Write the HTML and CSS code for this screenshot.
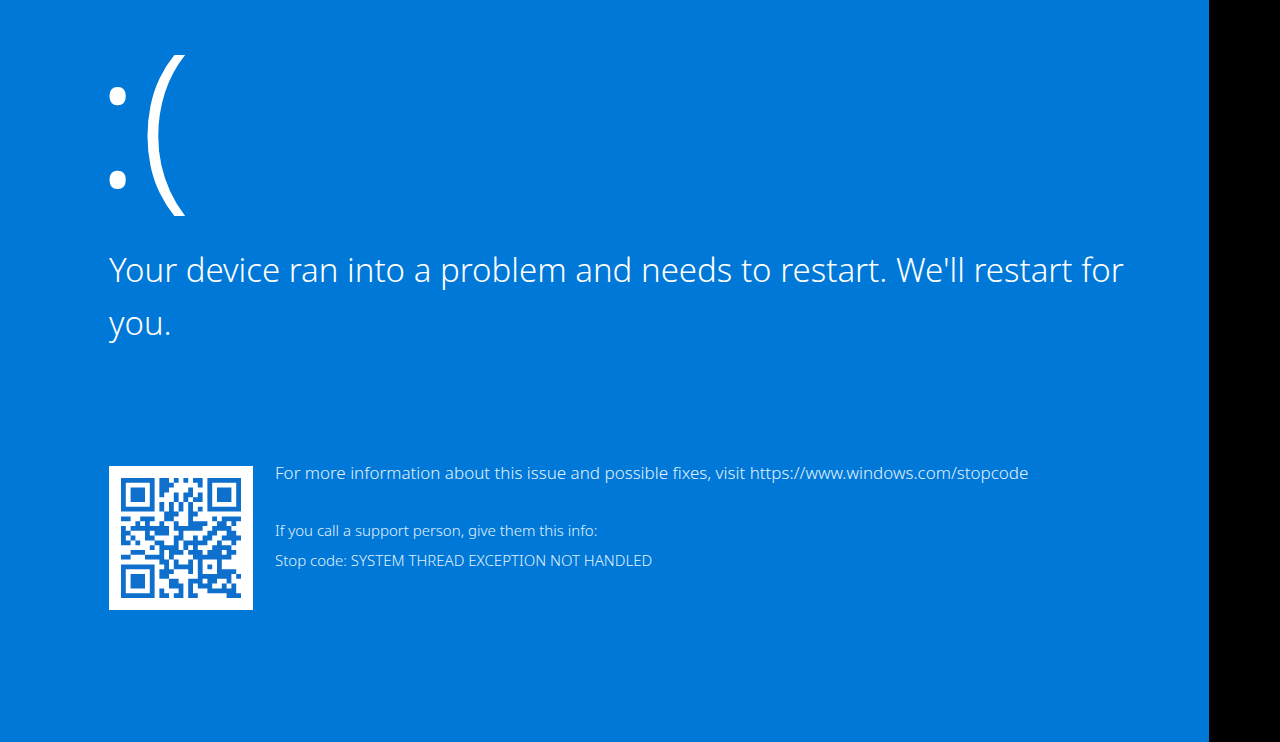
FILE: index.html
```
<!DOCTYPE html>
<html lang="en">
<head>
    <meta charset="utf-8">
    <title>Your device ran into a problem</title>
    <link rel="stylesheet" href="styles.css">
</head>
<body>

<main class="screen">
    <div class="face">:(</div>
    <h1 class="message">Your device ran into a problem and needs to restart. We'll restart for you.</h1>

    <div class="details">
        <div class="qr">
            <svg class="qr-code" viewBox="0 0 25 25" role="img" aria-label="QR code for https://www.windows.com/stopcode">
                <!-- one line of the code per row, each run of dark modules is a stroke -->
                <path transform="translate(0 .5)" d="
                    M0 0h7m1 0h2m1 0h1m1 0h1m1 0h2m1 0h7
                    M0 1h1m5 0h1m1 0h3m5 0h1m1 0h1m5 0h1
                    M0 2h1m1 0h3m1 0h1m1 0h2m4 0h1m3 0h1m1 0h3m1 0h1
                    M0 3h1m1 0h3m1 0h1m1 0h1m2 0h1m1 0h2m1 0h1m1 0h1m1 0h3m1 0h1
                    M0 4h1m1 0h3m1 0h1m4 0h1m1 0h1m1 0h2m1 0h1m1 0h3m1 0h1
                    M0 5h1m5 0h1m1 0h1m1 0h1m1 0h1m1 0h1m3 0h1m5 0h1
                    M0 6h7m1 0h1m1 0h1m1 0h1m1 0h1m1 0h1m1 0h7
                    M9 7h3m2 0h2
                    M0 8h2m2 0h3m2 0h2m3 0h1m4 0h1m1 0h4
                    M3 9h1m1 0h1m2 0h1m2 0h1m2 0h4m2 0h2m1 0h1
                    M0 10h1m1 0h8m1 0h6m2 0h4
                    M0 11h2m3 0h1m1 0h3m2 0h1m5 0h2m2 0h2
                    M0 12h1m1 0h1m2 0h2m4 0h2m2 0h1m1 0h2m2 0h4
                    M0 13h2m1 0h1m3 0h2m2 0h1m1 0h5m2 0h1m2 0h1
                    M6 14h1m1 0h4m1 0h1m1 0h1m3 0h4
                    M2 15h3m3 0h1m1 0h3m1 0h3m1 0h3m1 0h2
                    M0 16h2m3 0h4m1 0h1m4 0h8
                    M8 17h2m1 0h1m2 0h1m1 0h1m3 0h1
                    M0 18h7m2 0h1m1 0h4m1 0h1m1 0h1m1 0h1
                    M0 19h1m5 0h1m1 0h3m3 0h1m1 0h1m3 0h4
                    M0 20h1m1 0h3m1 0h1m1 0h2m6 0h7m1 0h1
                    M0 21h1m1 0h3m1 0h1m3 0h2m2 0h3m1 0h2m2 0h1
                    M0 22h1m1 0h3m1 0h1m3 0h3m1 0h1m1 0h3m2 0h1m1 0h1
                    M0 23h1m5 0h1m1 0h1m3 0h1m1 0h1m3 0h6
                    M0 24h7m1 0h2m1 0h2m1 0h2m6 0h3"/>
            </svg>
        </div>
        <div class="info">
            <p class="more">For more information about this issue and possible fixes, visit https://www.windows.com/stopcode</p>
            <p class="support">If you call a support person, give them this info:</p>
            <p class="support">Stop code: SYSTEM THREAD EXCEPTION NOT HANDLED</p>
        </div>
    </div>
</main>

</body>
</html>
```
FILE: styles.css
```
body {
    margin: 0;
    padding-right: 71px;
    background: #000000;
    font-family: "Noto Sans", "Open Sans", sans-serif;
}

.screen {
    box-sizing: border-box;
    min-height: 100vh;
    padding: 4px 72px 20px 109px;
    background: #0078d7;
    color: #ffffff;
}

/* pulled left so the colon lines up with the text below */
.face {
    margin-left: -14px;
    font-size: 184px;
    font-weight: 300;
    line-height: 224px;
}

.message {
    margin: 15px 0 0;
    font-size: 33px;
    font-weight: 300;
    line-height: 53px;
}

.details {
    display: flex;
    align-items: flex-start;
    gap: 22px;
    margin-top: 117px;
    font-weight: 300;
}

.qr {
    flex: none;
    width: 120px;
    padding: 12px;
    background: #ffffff;
}

.qr-code {
    display: block;
    stroke: #0f6fcd;
    stroke-width: 1;
}

.info {
    color: #e0f2ff;
}

.info p {
    margin: 0;
}

.info .more {
    margin-bottom: 35px;
    font-size: 17px;
    line-height: 14px;
}

.support {
    font-size: 15px;
    line-height: 30px;
}
```
